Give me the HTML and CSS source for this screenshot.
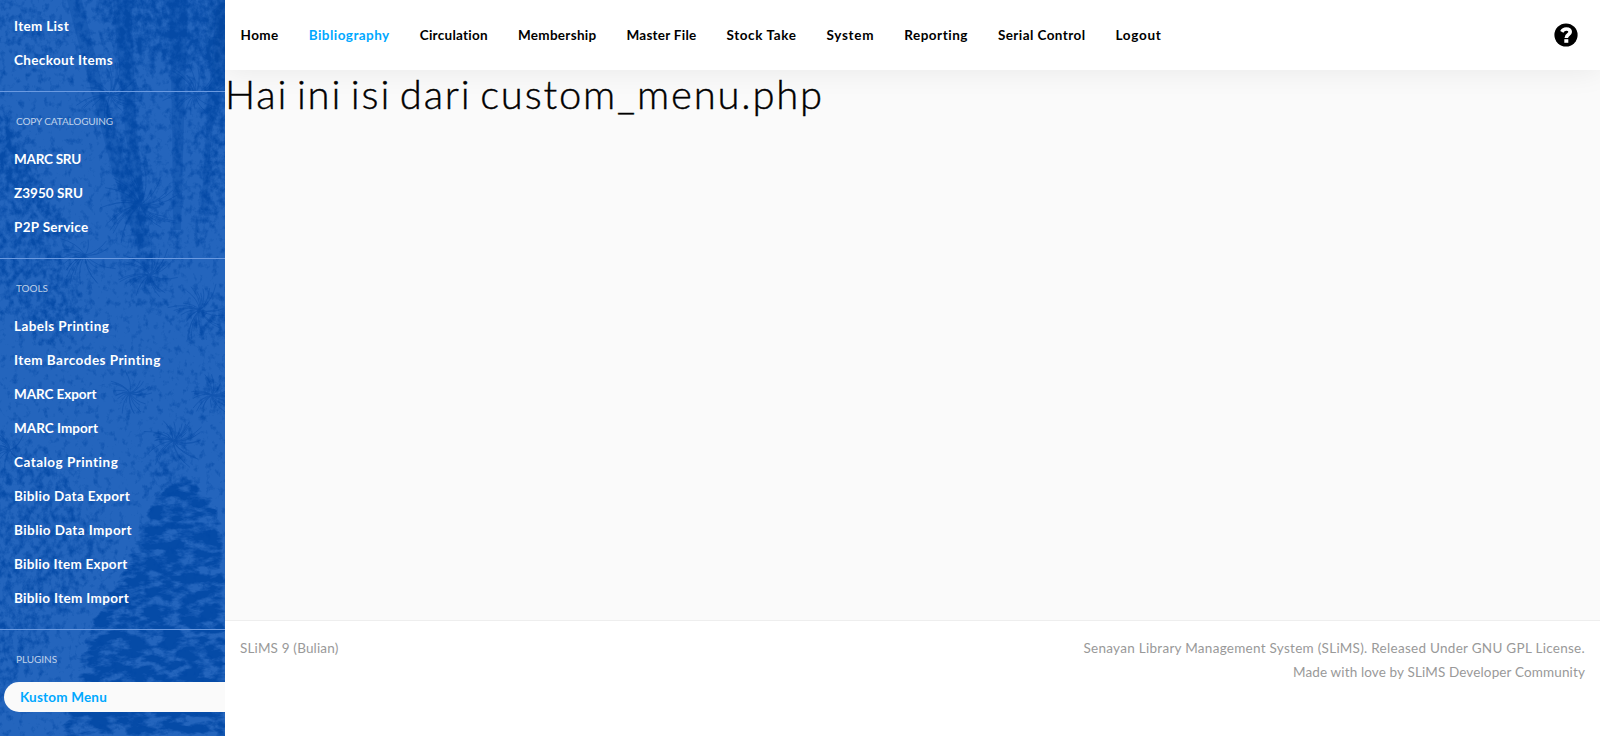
FILE: index.html
```html
<!DOCTYPE html>
<html lang="en">
<head>
<meta charset="utf-8">
<title>SLiMS 9 (Bulian)</title>
<link rel="stylesheet" href="styles.css">
</head>
<body>
<div class="app">
  <aside class="sidebar">
    <svg class="forest" width="225" height="736" viewBox="0 0 225 736" aria-hidden="true">
      <defs>
        <filter id="soft" x="-20%" y="-20%" width="140%" height="140%"><feGaussianBlur stdDeviation="10"/></filter>
        <filter id="edge" x="-20%" y="-20%" width="140%" height="140%"><feGaussianBlur stdDeviation="3"/></filter>
        <filter id="bark" filterUnits="userSpaceOnUse" x="0" y="0" width="225" height="736" color-interpolation-filters="sRGB">
          <feTurbulence type="fractalNoise" baseFrequency="0.16 0.13" numOctaves="4" seed="8" result="n"/>
          <feComposite in="SourceGraphic" in2="n" operator="arithmetic" k2="0.6" k3="1" k4="-0.62" result="m"/>
          <feComponentTransfer in="m" result="t"><feFuncA type="linear" slope="2.4"/></feComponentTransfer>
          <feFlood flood-color="#0046a3" flood-opacity=".8"/>
          <feComposite in2="t" operator="in"/>
        </filter>
        <filter id="rock" filterUnits="userSpaceOnUse" x="0" y="460" width="225" height="276" color-interpolation-filters="sRGB">
          <feTurbulence type="fractalNoise" baseFrequency="0.055 0.12" numOctaves="4" seed="5" result="n"/>
          <feComposite in="SourceGraphic" in2="n" operator="arithmetic" k2="0.8" k3="1.3" k4="-1.22" result="m"/>
          <feComponentTransfer in="m" result="t"><feFuncA type="linear" slope="3.2"/></feComponentTransfer>
          <feFlood flood-color="#0046a3" flood-opacity=".85"/>
          <feComposite in2="t" operator="in"/>
        </filter>
      </defs>
      <g filter="url(#bark)">
        <g filter="url(#soft)">
          <rect x="-40" y="-40" width="310" height="820" opacity=".1"/>
          <path d="M90-20H245V45L180 70L110 50Z" opacity=".55"/>
          <path d="M-20 90L30 150L90 310L60 350L-20 290Z" opacity=".4"/>
          <path d="M-20 0H50L75 80L20 70Z" opacity=".25"/>
          <path d="M110 60L150 70L165 310L125 300Z" opacity=".3"/>
          <path d="M200 50H240V180L195 250Z" opacity=".4"/>
          <path d="M180 310L240 290V340L190 345Z" opacity=".35"/>
          <path d="M195 380H240V410L200 405ZM150 440L180 430L190 500L150 490Z" opacity=".35"/>
          <path d="M-20 430L60 460L110 550L60 620L-20 736Z" opacity=".35"/>
        </g>
        <g filter="url(#edge)" opacity=".4">
          <path d="M67 0H82L101 80L126 165L150 245L138 250L112 170L91 90Z"/>
          <path d="M113 0H131L136 120L146 215L155 290H146L136 230L124 120Z"/>
          <path d="M169 0H188L184 120L181 270H173L172 120Z"/>
          <path d="M217 0H225V90L212 130L206 250H199L208 100Z"/>
          <path d="M0 100L18 135L42 185L80 245L65 240L0 165Z"/>
        </g>
      </g>
      <g class="trunks">
        <path d="M67 0H82L101 80L126 165L150 245L138 250L112 170L91 90Z"/>
        <path d="M113 0H131L136 120L146 215L136 230L124 120Z"/>
        <path d="M169 0H188L184 120L181 230H173L172 120Z"/>
        <path d="M217 0H225V90L212 130L206 210H201L208 100Z"/>
      </g>
      <g class="branches"></g>
      <g filter="url(#rock)">
        <path filter="url(#edge)" d="M168 480L195 478L225 525V736H62L82 640L125 565L145 515Z"/>
        <path filter="url(#soft)" opacity=".35" d="M60 680H240V760H50ZM205 560H240V700H190Z"/>
      </g>
    </svg>
    <nav class="menu">
      <section class="group">
        <a class="item"><span data-w="55">Item List</span></a>
        <a class="item"><span data-w="99">Checkout Items</span></a>
      </section>
      <section class="group">
        <h6 class="group-title"><span data-w="97">COPY CATALOGUING</span></h6>
        <a class="item"><span data-w="67">MARC SRU</span></a>
        <a class="item"><span data-w="69">Z3950 SRU</span></a>
        <a class="item"><span data-w="74.5">P2P Service</span></a>
      </section>
      <section class="group">
        <h6 class="group-title"><span data-w="32">TOOLS</span></h6>
        <a class="item"><span data-w="95.5">Labels Printing</span></a>
        <a class="item"><span data-w="147">Item Barcodes Printing</span></a>
        <a class="item"><span data-w="82.5">MARC Export</span></a>
        <a class="item"><span data-w="84">MARC Import</span></a>
        <a class="item"><span data-w="104.5">Catalog Printing</span></a>
        <a class="item"><span data-w="116">Biblio Data Export</span></a>
        <a class="item"><span data-w="118">Biblio Data Import</span></a>
        <a class="item"><span data-w="113.5">Biblio Item Export</span></a>
        <a class="item"><span data-w="115">Biblio Item Import</span></a>
      </section>
      <section class="group">
        <h6 class="group-title"><span data-w="41">PLUGINS</span></h6>
        <a class="item item-active"><span data-w="87">Kustom Menu</span></a>
      </section>
    </nav>
  </aside>
  <div class="page">
    <header class="topbar">
      <nav class="modules">
        <a data-w="38.2">Home</a>
        <a class="current" data-w="81">Bibliography</a>
        <a data-w="68.5">Circulation</a>
        <a data-w="78.5">Membership</a>
        <a data-w="70">Master File</a>
        <a data-w="70">Stock Take</a>
        <a data-w="47.7">System</a>
        <a data-w="64">Reporting</a>
        <a data-w="87.5">Serial Control</a>
        <a data-w="46">Logout</a>
      </nav>
      <svg class="help" width="24" height="24" viewBox="0 0 24 24">
        <circle cx="12" cy="12" r="11.6"/>
        <path class="hook" d="M7.8 8.8C8.8 6.9 10.4 6 12.2 6C14.6 6 16.2 7.2 16.2 9.1C16.2 11.7 12.3 11.4 12.3 14.9"/>
        <path class="dot" d="M10.3 16.2H14.3V19.8H10.3Z"/>
      </svg>
    </header>
    <main class="content"><h1 class="title"><span data-w="599">Hai ini isi dari custom_menu.php</span></h1></main>
    <footer class="footer">
      <div><span data-w="98.5">SLiMS 9 (Bulian)</span></div>
      <div class="credits">
        <div><span data-w="501.5">Senayan Library Management System (SLiMS). Released Under GNU GPL License.</span></div>
        <div><span data-w="292">Made with love by SLiMS Developer Community</span></div>
      </div>
    </footer>
  </div>
</div>
<script src="app.js"></script>
</body>
</html>
```
FILE: styles.css
```css
* { box-sizing: border-box; }
body { margin: 0; font-family: Lato, "Open Sans", sans-serif; color: #000; background: #fff; }
.app { display: flex; height: 736px; overflow: hidden; }
[data-w] { white-space: nowrap; }
.sidebar { position: relative; width: 225px; flex: none; background: #2465bd; overflow: hidden; }
.forest { position: absolute; inset: 0; }
.trunks { fill: #0046a3; opacity: .28; }
.branches { fill: none; stroke: #0046a3; stroke-width: .8; opacity: .5; }
.menu { position: relative; padding-top: 9px; }
.group { padding-bottom: 14px; }
.group + .group { border-top: 1px solid #6b9ae0; }
.group-title { margin: 0; height: 50px; padding: 9px 0 0 16px; font-size: 10px; line-height: 40px; font-weight: 400; color: rgba(255,255,255,.72); }
.item { display: block; height: 34px; padding-left: 14px; line-height: 34px; font-size: 13.5px; font-weight: 700; color: #fff; }
.item-active { height: 30px; margin: 2px 0 2px 4px; padding-left: 16px; line-height: 30px; border-radius: 15px 0 0 15px; background: #fafafa; color: #00a8ff; }
.page { flex: 1; display: flex; flex-direction: column; min-width: 0; }
.topbar { position: relative; height: 70px; flex: none; display: flex; justify-content: space-between; align-items: center; padding: 0 22px 0 15.5px; background: #fff; box-shadow: 0 0 30px rgba(0,0,0,.08); }
.modules { display: flex; gap: 30px; font-size: 13.5px; font-weight: 700; }
.modules a { flex: none; line-height: 20px; }
.modules .current { color: #00a8ff; }
.help { flex: none; margin-bottom: 1px; }
.hook { fill: none; stroke: #fff; stroke-width: 3.6; }
.dot { fill: #fff; }
.content { flex: 1; background: #fafafa; }
.title { margin: 0; font-size: 40px; line-height: 48px; font-weight: 300; word-spacing: -4px; -webkit-text-stroke: .4px #000; }
.footer { height: 116px; display: flex; justify-content: space-between; padding: 15px 15px 0; border-top: 1px solid #eee; background: #fff; font-size: 13.5px; line-height: 24px; font-weight: 400; color: #999; }
.credits { text-align: right; }
```
FILE: app.js
```js
document.querySelectorAll('[data-w]').forEach(function (el) {
  var gap = parseFloat(el.dataset.w) - el.getBoundingClientRect().width;
  el.style.letterSpacing = gap / el.textContent.length + 'px';
});

// Pine twigs behind the menu, from a seeded generator.
var seed = 11;
function rand() { seed = (seed * 16807) % 2147483647; return seed / 2147483647; }
function twigs(x, y, r, n) {
  var d = '';
  for (var i = 0; i < n; i++) {
    var a = rand() * 6.28, l = r * (0.4 + rand() * 0.6);
    var ex = x + Math.cos(a) * l, ey = y + Math.sin(a) * l;
    d += 'M' + x + ' ' + y + 'Q' + (x + Math.cos(a + 0.4) * l / 2) + ' ' + (y + Math.sin(a + 0.4) * l / 2) + ' ' + ex + ' ' + ey;
  }
  return d;
}
var paths = [[130, 393, 25, 26], [173, 441, 32, 34], [200, 310, 34, 24], [150, 275, 32, 26], [212, 395, 24, 24], [10, 450, 22, 18], [140, 205, 45, 36], [110, 95, 38, 26], [195, 95, 35, 22], [85, 255, 35, 18]];
document.querySelector('.branches').innerHTML = paths.map(function (p) {
  return '<path d="' + twigs(p[0], p[1], p[2], p[3]) + '"/>';
}).join('');
```
